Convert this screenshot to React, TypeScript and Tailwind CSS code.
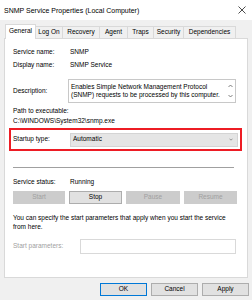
import React from "react";

const tabs = [
  { label: "General", w: "w-[31px]", active: true },
  { label: "Log On", w: "w-[27px]" },
  { label: "Recovery", w: "w-[37px]" },
  { label: "Agent", w: "w-[28px]" },
  { label: "Traps", w: "w-[26px]" },
  { label: "Security", w: "w-[30px]" },
  { label: "Dependencies", w: "w-[52px]" },
];

const Chevron = ({ up = false }: { up?: boolean }) => (
  <svg width="5" height="4" viewBox="0 0 5 4" className="block">
    <path
      d={up ? "M0.5 3 L2.5 1 L4.5 3" : "M0.5 1 L2.5 3 L4.5 1"}
      fill="none"
      stroke="#606060"
      strokeWidth="0.8"
    />
  </svg>
);

const Btn = ({
  label,
  disabled,
  primary,
  w = "w-[53px]",
}: {
  label: string;
  disabled?: boolean;
  primary?: boolean;
  w?: string;
}) => (
  <div
    className={`${w} h-[13px] flex items-center justify-center border ${
      disabled
        ? "bg-[#cccccc] border-[#cccccc] text-[#a0a0a0]"
        : primary
        ? "bg-[#e1e1e1] border-[#0078d7] text-black"
        : "bg-[#e1e1e1] border-[#adadad] text-black"
    }`}
  >
    {label}
  </div>
);

export default function App() {
  return (
    <div className="w-[252px] h-[300px] bg-[#f0f0f0] overflow-hidden font-['Liberation_Sans',Arial,sans-serif] text-[6.5px] leading-none text-black">
      {/* title bar */}
      <div className="h-[20px] bg-white flex items-center justify-between pl-[4px] pr-[6px]">
        <span className="text-[7px]">SNMP Service Properties (Local Computer)</span>
        <svg width="8" height="8" viewBox="0 0 8 8">
          <path d="M0.5 0.5 L7.5 7.5 M7.5 0.5 L0.5 7.5" stroke="#000" strokeWidth="0.7" />
        </svg>
      </div>

      {/* tabs */}
      <div className="flex items-end h-[18px] pl-[5px]">
        {tabs.map((t) =>
          t.active ? (
            <div
              key={t.label}
              className={`${t.w} h-[15px] bg-white border border-b-0 border-[#d9d9d9] flex items-center justify-center relative z-10 mb-[-1px] pb-[1px]`}
            >
              {t.label}
            </div>
          ) : (
            <div
              key={t.label}
              className={`${t.w} h-[12px] border border-l-0 border-b-0 border-[#d9d9d9] flex items-center justify-center`}
            >
              {t.label}
            </div>
          )
        )}
      </div>

      {/* panel */}
      <div className="mx-[4px] h-[240px] bg-white border border-[#d9d9d9] pt-[7px]">
        <div className="flex h-[13px] items-center pl-[8px]">
          <span className="w-[57px]">Service name:</span>
          <span>SNMP</span>
        </div>
        <div className="flex h-[13px] items-center pl-[8px]">
          <span className="w-[57px]">Display name:</span>
          <span>SNMP Service</span>
        </div>

        <div className="flex items-center pl-[8px] mt-[7px]">
          <span className="w-[55px]">Description:</span>
          <div className="w-[168px] h-[24px] border border-[#c8c8c8] flex">
            <div className="flex-1 pl-[2px] pt-[3px] leading-[8px]">
              Enables Simple Network Management Protocol (SNMP) requests to be processed by this computer.
            </div>
            <div className="w-[9px] flex flex-col items-center justify-between py-[4px]">
              <Chevron up />
              <Chevron />
            </div>
          </div>
        </div>

        <div className="pl-[8px] mt-[3px] leading-[10px]">
          <div>Path to executable:</div>
          <div>C:\WINDOWS\System32\snmp.exe</div>
        </div>

        <div className="ml-[4px] mt-[2px] w-[233px] h-[23px] border-2 border-[#ed1c24] flex items-center pl-[2px]">
          <span className="w-[57px]">Startup type:</span>
          <div className="w-[168px] h-[14px] bg-[#e5e5e5] border border-[#d4d4d4] flex items-center justify-between pl-[2px] pr-[4px]">
            <span>Automatic</span>
            <svg width="4" height="3" viewBox="0 0 4 3">
              <path d="M0.5 0.7 L2 2.2 L3.5 0.7" fill="none" stroke="#606060" strokeWidth="0.6" />
            </svg>
          </div>
        </div>

        <div className="ml-[8px] mt-[16px] w-[221px] h-px bg-[#a0a0a0]" />

        <div className="flex h-[12px] items-center pl-[8px] mt-[8px]">
          <span className="w-[57px]">Service status:</span>
          <span>Running</span>
        </div>

        <div className="flex gap-[4px] pl-[8px] mt-[3px]">
          <Btn label="Start" disabled w="w-[52px]" />
          <Btn label="Stop" w="w-[53px]" />
          <Btn label="Pause" disabled w="w-[54px]" />
          <Btn label="Resume" disabled w="w-[53px]" />
        </div>

        <div className="pl-[8px] pr-[18px] mt-[9px] leading-[9px]">
          You can specify the start parameters that apply when you start the service from here.
        </div>

        <div className="flex items-center pl-[8px] mt-[8px]">
          <span className="w-[67px] text-[#a0a0a0]">Start parameters:</span>
          <div className="w-[156px] h-[15px] border border-[#d9d9d9] bg-white" />
        </div>
      </div>

      {/* bottom buttons */}
      <div className="flex justify-end gap-[4px] pr-[3px] mt-[5px]">
        <Btn label="OK" primary w="w-[47px]" />
        <Btn label="Cancel" w="w-[47px]" />
        <Btn label="Apply" w="w-[47px]" />
      </div>
    </div>
  );
}
